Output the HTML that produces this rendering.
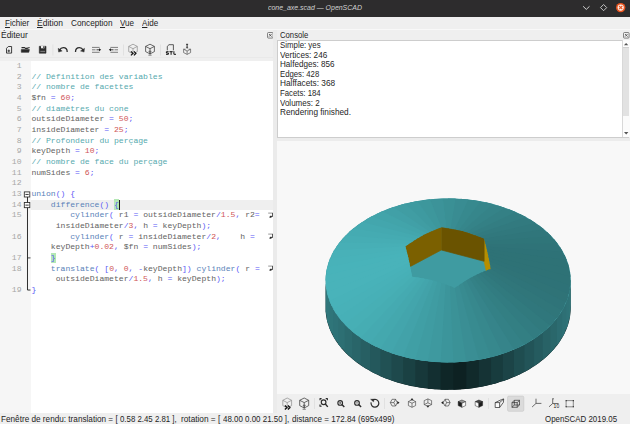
<!DOCTYPE html>
<html><head><meta charset="utf-8"><title>cone_axe.scad — OpenSCAD</title>
<style>
html,body{margin:0;padding:0;overflow:hidden;}
html{width:630px;height:424px;}
body{width:630px;height:424px;overflow:hidden;background:#efefef;position:relative;font-family:"Liberation Sans",sans-serif;color:#2b2b2b;}
div,span,svg{position:absolute;white-space:pre;}
span{position:static;}
.ln{left:0;width:21.5px;text-align:right;font-family:"Liberation Mono",monospace;font-size:8.11px;line-height:10.28px;height:10.28px;color:#a6a6a6;}
.cl{left:31.4px;font-family:"Liberation Mono",monospace;font-size:8.11px;line-height:10.28px;height:10.28px;}
.wrap{left:268px;}
</style></head><body>
<!-- title bar -->
<div style="left:0;top:0;width:630px;height:16.6px;background:#2d2c2d"></div>
<div style="left:268.00px;top:2px;font-size:7.8px;line-height:11.195px;color:#d2d2d2;font-style:italic;transform-origin:0 0;transform:scaleX(0.8920);">cone_axe.scad — OpenSCAD</div>
<svg style="left:578px;top:0" width="52" height="16" viewBox="578 0 52 16">
<path d="M583.1 6.3 L586.3 9.4 L589.5 6.3" fill="none" stroke="#d2d2d2" stroke-width="1"/>
<path d="M603.6 4.5 L606.7 7.6 L603.6 10.7 L600.5 7.6 Z" fill="none" stroke="#d2d2d2" stroke-width="0.9"/>
<circle cx="620.7" cy="7.6" r="4.7" fill="#e9541f"/>
<circle cx="620.7" cy="7.6" r="3.1" fill="#fbefe9"/>
<path d="M619.1 6 L622.3 9.2 M622.3 6 L619.1 9.2" stroke="#e9541f" stroke-width="1.1"/>
</svg>
<!-- menubar -->
<div style="left:0;top:16.6px;width:630px;height:12.4px;background:#efefef"></div>
<div style="left:4.50px;top:17px;font-size:9.0px;line-height:12.363px;color:#242424;transform-origin:0 0;transform:scaleX(0.8963);"><u>F</u>ichier</div>
<div style="left:36.50px;top:17px;font-size:9.0px;line-height:12.363px;color:#242424;transform-origin:0 0;transform:scaleX(0.9441);"><u>É</u>dition</div>
<div style="left:70.50px;top:17px;font-size:9.0px;line-height:12.363px;color:#242424;transform-origin:0 0;transform:scaleX(0.9113);">Conception</div>
<div style="left:119.90px;top:17px;font-size:9.0px;line-height:12.363px;color:#242424;transform-origin:0 0;transform:scaleX(0.8940);"><u>V</u>ue</div>
<div style="left:141.70px;top:17px;font-size:9.0px;line-height:12.363px;color:#242424;transform-origin:0 0;transform:scaleX(0.8944);"><u>A</u>ide</div>
<div style="left:0;top:29.2px;width:630px;height:0.9px;background:#f8f8f8"></div>
<!-- dock titles -->
<div style="left:1.10px;top:29px;font-size:9.0px;line-height:12.363px;color:#242424;transform-origin:0 0;transform:scaleX(0.9394);">Éditeur</div>
<div style="left:279.70px;top:29px;font-size:9.0px;line-height:12.363px;color:#242424;transform-origin:0 0;transform:scaleX(0.8568);">Console</div>
<svg style="left:267px;top:31.6px" width="7" height="7" viewBox="0 0 7 7"><rect x="0.5" y="0.5" width="5.6" height="5.6" rx="1" fill="none" stroke="#555" stroke-width="0.7"/><path d="M2 2 L4.6 4.6 M4.6 2 L2 4.6" stroke="#444" stroke-width="0.8"/></svg>
<svg style="left:622.9px;top:31.7px" width="7" height="7" viewBox="0 0 7 7"><rect x="0.5" y="0.5" width="5.6" height="5.6" rx="1" fill="none" stroke="#555" stroke-width="0.7"/><path d="M2 2 L4.6 4.6 M4.6 2 L2 4.6" stroke="#444" stroke-width="0.8"/></svg>
<!-- editor toolbar icons -->
<svg style="left:0;top:40px" width="200" height="20" viewBox="0 40 200 20">
<g fill="none" stroke="#2b2b2b" stroke-width="0.9" stroke-linejoin="round">
<!-- new -->
<path d="M8.3 46.5 H11.6 V53.1 H6.5 V48.3 Z" />
<path d="M7.5 50.9 H10.1 M8.8 49.6 V52.2" stroke-width="0.9"/>
<!-- open -->
<path d="M21.5 47.6 H24.6 L25.4 48.4 H27.5" stroke-width="1.1"/>
<path d="M26.5 48.6 L29.6 47.5" stroke-width="1.1"/>
<path d="M21.3 49.6 H29.4 L28.8 52.3 H21.3 Z" fill="#2b2b2b" stroke-width="0.6"/>
<!-- save -->
<path d="M39.3 46.3 H46 V53.2 H39.3 Z" fill="#2b2b2b" stroke-width="0.6"/>
<rect x="41" y="46" width="3.4" height="2.3" fill="#efefef" stroke="none"/>
<rect x="43.2" y="46.3" width="0.8" height="1.6" fill="#2b2b2b" stroke="none"/>
<rect x="40.3" y="50.8" width="4.8" height="1.3" fill="#777" stroke="none"/>
<!-- undo -->
<path d="M67.2 52 C67.2 49.3 65.6 47.6 63.3 47.6 C61.5 47.6 60.3 48.6 59.6 50" stroke-width="1.3"/>
<path d="M58.2 48.3 L58.6 52.1 L62.2 51 Z" fill="#2b2b2b" stroke-width="0.4"/>
<!-- redo -->
<path d="M75.5 52 C75.5 49.3 77.1 47.6 79.4 47.6 C81.2 47.6 82.4 48.6 83.1 50" stroke-width="1.3"/>
<path d="M84.5 48.3 L84.1 52.1 L80.5 51 Z" fill="#2b2b2b" stroke-width="0.4"/>
<!-- indent -->
<path d="M92 47.4 H99.6 M92 49.8 H95.5 M92 52.3 H99.6" stroke-width="0.75" stroke="#555"/>
<path d="M96.5 49.8 H100" stroke-width="0.9"/>
<path d="M99 48.3 L101.2 49.8 L99 51.3 Z" fill="#222" stroke="none"/>
<!-- unindent -->
<path d="M110.4 47.4 H118 M114.5 49.8 H118 M110.4 52.3 H118" stroke-width="0.75" stroke="#555"/>
<path d="M110 49.8 H113.5" stroke-width="0.9"/>
<path d="M111 48.3 L108.8 49.8 L111 51.3 Z" fill="#222" stroke="none"/>
<!-- preview cube -->
<g stroke="#8a8a8a" stroke-width="0.7">
<path d="M133 44.2 L137.3 46.4 V51.6 L133 53.9 L128.7 51.6 V46.4 Z"/>
<path d="M128.7 46.4 L133 48.7 L137.3 46.4 M133 48.7 V53.9"/>
</g>
<path d="M130.9 51.4 L133 53.4 L130.9 55.4 M133.9 51.4 L136 53.4 L133.9 55.4" stroke-width="1.3" stroke="#111"/>
<!-- render cube -->
<g stroke="#3a3a3a" stroke-width="0.75">
<path d="M150 44.2 L154.4 46.4 V51.6 L150 53.9 L145.6 51.6 V46.4 Z"/>
<path d="M145.6 46.4 L150 48.7 L154.4 46.4 M150 48.7 V53.9"/>
<path d="M148.8 51.2 H151.2 L150 52.6 Z M150 52.6 V54.6 M148.4 55.2 H151.6" stroke-width="0.6"/>
</g>
<!-- STL -->
<path d="M167.3 50.3 V46.3 L169 44.7 H173.4 V50.3" stroke-width="0.8" stroke="#333"/>
<!-- 3d print -->
<path d="M187.1 44 V47.6 M186.1 44.3 H188.1" stroke-width="1" stroke="#333"/>
<path d="M186.2 47.2 L187.1 48.6 L188 47.2 Z" fill="#333" stroke-width="0.3"/>
<g stroke="#555" stroke-width="0.7">
<path d="M183.6 49.2 H185.6 M188.6 49.2 H190.6 V52.6 L187.1 54.4 L183.6 52.6 V49.2"/>
<path d="M183.6 49.2 L187.1 51 L190.6 49.2 M187.1 51 V54.4"/>
</g>
</g>
<path d="M168.6 51.7 H166.4 V53 H168.4 V54.3 H166 M169.5 51.7 H172.7 M171.1 51.7 V54.8 M173.9 51.2 V54.3 H176" fill="none" stroke="#151515" stroke-width="1"/>
<!-- separators -->
<g fill="#dcdcdc">
<rect x="52.6" y="44.5" width="0.7" height="11"/>
<rect x="123.2" y="44.5" width="0.7" height="11"/>
<rect x="160.3" y="44.5" width="0.7" height="11"/>
</g>
</svg>

<div style="left:0;top:56.6px;width:273.2px;height:0.7px;background:#e9e9e9"></div>
<!-- editor -->
<div style="left:0;top:60.5px;width:273.2px;height:352.1px;background:#ffffff"></div>
<div style="left:0;top:60.5px;width:30.5px;height:352.1px;background:#f6f6f6"></div>
<div style="left:30.5px;top:199.51px;width:242.7px;height:10.37px;background:#efefef"></div>
<!-- fold margin -->
<svg style="left:22px;top:188.54px" width="10" height="106.7" viewBox="0 0 10 106.7">
<path d="M5.5 8 V101.03 H8.5" fill="none" stroke="#2e2e2e" stroke-width="1"/>
<path d="M5.5 68.92 H8.5" fill="none" stroke="#2e2e2e" stroke-width="0.9"/>
<rect x="2.3" y="2.9" width="5.5" height="5.1" fill="#fff" stroke="#2a2a2a" stroke-width="0.85"/>
<path d="M3.4 5.45 H6.7" stroke="#222" stroke-width="0.9"/>
<rect x="2.3" y="13.57" width="5.5" height="5.1" fill="#fff" stroke="#2a2a2a" stroke-width="0.85"/>
<path d="M3.4 16.12 H6.7" stroke="#222" stroke-width="0.9"/>
</svg>
<div style="left:113.92px;top:199.41px;width:5.07px;height:10.3px;background:#b4e8b4"></div>
<div style="left:50.66px;top:252.76px;width:5.07px;height:10.3px;background:#b4e8b4"></div>
<div class="ln" style="top:61px">1</div><div class="cl" style="top:61px"></div><div class="ln" style="top:72px">2</div><div class="cl" style="top:72px"><span style="color:#55a9ae">// Définition des variables</span></div><div class="ln" style="top:82px">3</div><div class="cl" style="top:82px"><span style="color:#55a9ae">// nombre de facettes</span></div><div class="ln" style="top:93px">4</div><div class="cl" style="top:93px"><span style="color:#626261">$fn</span> <span style="color:#5a5af6">=</span> <span style="color:#cf5657">60</span><span style="color:#5a5af6">;</span></div><div class="ln" style="top:104px">5</div><div class="cl" style="top:104px"><span style="color:#55a9ae">// diamètres du cone</span></div><div class="ln" style="top:114px">6</div><div class="cl" style="top:114px"><span style="color:#626261">outsideDiameter</span> <span style="color:#5a5af6">=</span> <span style="color:#cf5657">50</span><span style="color:#5a5af6">;</span></div><div class="ln" style="top:125px">7</div><div class="cl" style="top:125px"><span style="color:#626261">insideDiameter</span> <span style="color:#5a5af6">=</span> <span style="color:#cf5657">25</span><span style="color:#5a5af6">;</span></div><div class="ln" style="top:136px">8</div><div class="cl" style="top:136px"><span style="color:#55a9ae">// Profondeur du perçage</span></div><div class="ln" style="top:146px">9</div><div class="cl" style="top:146px"><span style="color:#626261">keyDepth</span> <span style="color:#5a5af6">=</span> <span style="color:#cf5657">10</span><span style="color:#5a5af6">;</span></div><div class="ln" style="top:157px">10</div><div class="cl" style="top:157px"><span style="color:#55a9ae">// nombre de face du perçage</span></div><div class="ln" style="top:168px">11</div><div class="cl" style="top:168px"><span style="color:#626261">numSides</span> <span style="color:#5a5af6">=</span> <span style="color:#cf5657">6</span><span style="color:#5a5af6">;</span></div><div class="ln" style="top:178px">12</div><div class="cl" style="top:178px"></div><div class="ln" style="top:189px">13</div><div class="cl" style="top:189px"><span style="color:#5781b8">union</span><span style="color:#5a5af6">(</span><span style="color:#5a5af6">)</span> <span style="color:#5a5af6">{</span></div><div class="ln" style="top:200px">14</div><div class="cl" style="top:200px">    <span style="color:#5781b8">difference</span><span style="color:#5a5af6">(</span><span style="color:#5a5af6">)</span> <span style="color:#5a5af6">{</span></div><div class="ln" style="top:210px">15</div><div class="cl" style="top:210px">        <span style="color:#5781b8">cylinder</span><span style="color:#5a5af6">(</span> <span style="color:#626261">r1</span> <span style="color:#5a5af6">=</span> <span style="color:#626261">outsideDiameter</span><span style="color:#5a5af6">/</span><span style="color:#cf5657">1.5</span><span style="color:#5a5af6">,</span> <span style="color:#626261">r2</span><span style="color:#5a5af6">=</span></div><svg class="wrap" style="top:209.88px" width="6" height="10" viewBox="0 0 6 10"><path d="M0.2 3.1 H4.6" fill="none" stroke="#8a8a8a" stroke-width="0.9"/><path d="M4.6 2.9 V6.5 H2.6" fill="none" stroke="#333" stroke-width="0.9"/><path d="M3.2 5.2 L1 7.2 L3.4 7.9 Z" fill="#222"/></svg><div class="cl" style="top:221px">     <span style="color:#626261">insideDiameter</span><span style="color:#5a5af6">/</span><span style="color:#cf5657">3</span><span style="color:#5a5af6">,</span> <span style="color:#626261">h</span> <span style="color:#5a5af6">=</span> <span style="color:#626261">keyDepth</span><span style="color:#5a5af6">)</span><span style="color:#5a5af6">;</span></div><div class="ln" style="top:232px">16</div><div class="cl" style="top:232px">        <span style="color:#5781b8">cylinder</span><span style="color:#5a5af6">(</span> <span style="color:#626261">r</span> <span style="color:#5a5af6">=</span> <span style="color:#626261">insideDiameter</span><span style="color:#5a5af6">/</span><span style="color:#cf5657">2</span><span style="color:#5a5af6">,</span>    <span style="color:#626261">h</span> <span style="color:#5a5af6">=</span></div><svg class="wrap" style="top:231.22px" width="6" height="10" viewBox="0 0 6 10"><path d="M0.2 3.1 H4.6" fill="none" stroke="#8a8a8a" stroke-width="0.9"/><path d="M4.6 2.9 V6.5 H2.6" fill="none" stroke="#333" stroke-width="0.9"/><path d="M3.2 5.2 L1 7.2 L3.4 7.9 Z" fill="#222"/></svg><div class="cl" style="top:242px">    <span style="color:#626261">keyDepth</span><span style="color:#5a5af6">+</span><span style="color:#cf5657">0.02</span><span style="color:#5a5af6">,</span> <span style="color:#626261">$fn</span> <span style="color:#5a5af6">=</span> <span style="color:#626261">numSides</span><span style="color:#5a5af6">)</span><span style="color:#5a5af6">;</span></div><div class="ln" style="top:253px">17</div><div class="cl" style="top:253px">    <span style="color:#5a5af6">}</span></div><div class="ln" style="top:264px">18</div><div class="cl" style="top:264px">    <span style="color:#5781b8">translate</span><span style="color:#5a5af6">(</span> <span style="color:#5a5af6">[</span><span style="color:#cf5657">0</span><span style="color:#5a5af6">,</span> <span style="color:#cf5657">0</span><span style="color:#5a5af6">,</span> <span style="color:#5a5af6">-</span><span style="color:#626261">keyDepth</span><span style="color:#5a5af6">]</span><span style="color:#5a5af6">)</span> <span style="color:#5781b8">cylinder</span><span style="color:#5a5af6">(</span> <span style="color:#626261">r</span> <span style="color:#5a5af6">=</span></div><svg class="wrap" style="top:263.23px" width="6" height="10" viewBox="0 0 6 10"><path d="M0.2 3.1 H4.6" fill="none" stroke="#8a8a8a" stroke-width="0.9"/><path d="M4.6 2.9 V6.5 H2.6" fill="none" stroke="#333" stroke-width="0.9"/><path d="M3.2 5.2 L1 7.2 L3.4 7.9 Z" fill="#222"/></svg><div class="cl" style="top:274px">     <span style="color:#626261">outsideDiameter</span><span style="color:#5a5af6">/</span><span style="color:#cf5657">1.5</span><span style="color:#5a5af6">,</span> <span style="color:#626261">h</span> <span style="color:#5a5af6">=</span> <span style="color:#626261">keyDepth</span><span style="color:#5a5af6">)</span><span style="color:#5a5af6">;</span></div><div class="ln" style="top:285px">19</div><div class="cl" style="top:285px"><span style="color:#5a5af6">}</span></div>
<!-- caret -->
<div style="left:118.54px;top:199.51px;width:1px;height:10.2px;background:#1a1a1a"></div>
<!-- splitter -->
<div style="left:273.2px;top:29.6px;width:3.8px;height:384px;background:#ebebeb"></div>
<!-- console -->
<div style="left:277.3px;top:40px;width:352.2px;height:97.6px;background:#fff;border:0.6px solid #cdcdcd;box-sizing:border-box"></div>
<div style="left:622.4px;top:40.4px;width:6.9px;height:96.5px;background:#fbfbfb;border-left:0.5px solid #d8d8d8"></div>
<div style="left:622.9px;top:47.3px;width:6.4px;height:69.2px;background:#e2e2e2"></div>
<div style="left:622.9px;top:47.1px;width:6.4px;height:0.5px;background:#d0d0d0"></div>
<div style="left:622.9px;top:129.9px;width:6.4px;height:0.5px;background:#d8d8d8"></div>
<div style="left:622.9px;top:40.6px;width:6.4px;height:6.4px;background:#fdfdfd"></div>
<div style="left:622.9px;top:130.3px;width:6.4px;height:6.5px;background:#fdfdfd"></div>
<svg style="left:622px;top:40px" width="8" height="98" viewBox="622 40 8 98"><path d="M623.9 45.3 L626.1 43 L628.3 45.3 Z M624 132.1 L626.2 134.4 L628.4 132.1 Z" fill="#555"/></svg>
<div style="left:279.90px;top:39px;font-size:9.0px;line-height:12.363px;color:#262626;transform-origin:0 0;transform:scaleX(0.8726);">Simple: yes</div><div style="left:279.90px;top:49px;font-size:9.0px;line-height:12.363px;color:#262626;transform-origin:0 0;transform:scaleX(0.9073);">Vertices: 246</div><div style="left:279.90px;top:58px;font-size:9.0px;line-height:12.363px;color:#262626;transform-origin:0 0;transform:scaleX(0.9005);">Halfedges: 856</div><div style="left:279.90px;top:68px;font-size:9.0px;line-height:12.363px;color:#262626;transform-origin:0 0;transform:scaleX(0.8608);">Edges: 428</div><div style="left:279.90px;top:77px;font-size:9.0px;line-height:12.363px;color:#262626;transform-origin:0 0;transform:scaleX(0.9206);">Halffacets: 368</div><div style="left:279.90px;top:87px;font-size:9.0px;line-height:12.363px;color:#262626;transform-origin:0 0;transform:scaleX(0.8634);">Facets: 184</div><div style="left:279.90px;top:97px;font-size:9.0px;line-height:12.363px;color:#262626;transform-origin:0 0;transform:scaleX(0.8898);">Volumes: 2</div><div style="left:279.90px;top:106px;font-size:9.0px;line-height:12.363px;color:#262626;transform-origin:0 0;transform:scaleX(0.9144);">Rendering finished.</div>
<div style="left:277px;top:137.6px;width:353px;height:3.1px;background:#ececec"></div>
<!-- 3d view -->
<div style="left:277.4px;top:140.7px;width:352.6px;height:253.1px;background:#f8f8f8;overflow:hidden">
<div style="left:-0.4px;top:-0.2px"><svg width="353.0" height="253.3" viewBox="277.0 140.5 353.0 253.3">
<polygon points="325.62,283.50 325.92,286.71 326.42,289.92 327.10,293.11 327.96,296.28 329.02,299.42 330.25,302.53 331.67,305.61 333.27,308.65 335.04,311.65 336.99,314.59 339.11,317.48 341.40,320.32 343.85,323.09 346.46,325.80 349.23,328.43 352.16,330.99 355.23,333.47 358.44,335.87 361.79,338.18 365.28,340.41 368.89,342.54 372.63,344.57 376.48,346.50 380.44,348.33 384.51,350.06 388.67,351.67 392.93,353.18 397.27,354.57 401.69,355.85 406.18,357.01 410.73,358.06 415.35,358.98 420.01,359.78 424.72,360.45 429.46,361.01 434.23,361.43 439.03,361.73 443.83,361.91 448.65,361.96 453.46,361.88 458.27,361.68 463.05,361.35 467.82,360.89 472.56,360.31 477.25,359.61 481.91,358.78 486.51,357.83 491.05,356.77 495.53,355.58 499.93,354.27 504.25,352.86 508.49,351.32 512.63,349.68 516.67,347.93 520.61,346.08 524.44,344.13 528.15,342.07 531.73,339.92 535.19,337.68 538.51,335.35 541.69,332.93 544.73,330.43 547.62,327.85 550.35,325.20 552.93,322.48 555.35,319.69 557.60,316.85 559.68,313.94 561.59,310.98 563.33,307.98 564.89,304.93 566.26,301.84 567.46,298.72 568.47,295.57 569.30,292.40 569.93,289.21 570.39,286.00 570.65,282.78 570.72,279.56 570.61,276.34 570.61,303.67 570.72,306.90 570.65,310.12 570.39,313.33 569.93,316.54 569.30,319.73 568.47,322.91 567.46,326.06 566.26,329.18 564.89,332.27 563.33,335.31 561.59,338.32 559.68,341.28 557.60,344.18 555.35,347.03 552.93,349.81 550.35,352.54 547.62,355.19 544.73,357.76 541.69,360.26 538.51,362.68 535.19,365.01 531.73,367.26 528.15,369.41 524.44,371.46 520.61,373.42 516.67,375.27 512.63,377.02 508.49,378.66 504.25,380.19 499.93,381.61 495.53,382.91 491.05,384.10 486.51,385.17 481.91,386.12 477.25,386.94 472.56,387.65 467.82,388.23 463.05,388.68 458.27,389.01 453.46,389.22 448.65,389.29 443.83,389.25 439.03,389.07 434.23,388.77 429.46,388.34 424.72,387.79 420.01,387.11 415.35,386.31 410.73,385.39 406.18,384.35 401.69,383.19 397.27,381.91 392.93,380.52 388.67,379.01 384.51,377.39 380.44,375.67 376.48,373.84 372.63,371.90 368.89,369.87 365.28,367.74 361.79,365.52 358.44,363.21 355.23,360.81 352.16,358.33 349.23,355.77 346.46,353.13 343.85,350.43 341.40,347.65 339.11,344.82 336.99,341.93 335.04,338.98 333.27,335.99 331.67,332.95 330.25,329.87 329.02,326.75 327.96,323.61 327.10,320.44 326.42,317.25 325.92,314.05 325.62,310.83" fill="#0d2123"/>
<polygon points="325.62,310.83 328.23,324.45 328.23,297.12 325.62,283.50" fill="#30777c"/>
<polygon points="326.85,319.38 331.57,332.74 331.57,305.41 326.85,292.05" fill="#30767b"/>
<polygon points="329.41,327.80 336.19,340.75 336.19,313.42 329.41,300.46" fill="#2f7579"/>
<polygon points="333.27,335.99 342.04,348.40 342.04,321.06 333.27,308.65" fill="#2e7277"/>
<polygon points="338.38,343.86 349.04,355.59 349.04,328.26 338.38,316.53" fill="#2d6f73"/>
<polygon points="344.70,351.33 357.14,362.26 357.14,334.92 344.70,324.00" fill="#2b6a6e"/>
<polygon points="352.16,358.33 366.23,368.32 366.23,340.98 352.16,330.99" fill="#296569"/>
<polygon points="360.66,364.76 376.22,373.71 376.22,346.38 360.66,337.42" fill="#275f63"/>
<polygon points="370.12,370.56 386.99,378.38 386.99,351.04 370.12,343.22" fill="#24585c"/>
<polygon points="380.44,375.67 398.44,382.26 398.44,354.93 380.44,348.33" fill="#215154"/>
<polygon points="391.50,380.03 410.43,385.32 410.43,357.99 391.50,352.69" fill="#1e494c"/>
<polygon points="403.18,383.59 422.83,387.53 422.83,360.20 403.18,356.25" fill="#1a4143"/>
<polygon points="415.35,386.31 435.51,388.86 435.51,361.53 415.35,358.98" fill="#17383a"/>
<polygon points="427.88,388.17 448.33,389.30 448.33,361.96 427.88,360.84" fill="#132f31"/>
<polygon points="440.63,389.14 461.14,388.83 461.14,361.50 440.63,361.81" fill="#0f2627"/>
<polygon points="453.46,389.22 473.81,387.47 473.81,360.14 453.46,361.88" fill="#0d2122"/>
<polygon points="466.24,388.39 486.20,385.24 486.20,357.90 466.24,361.06" fill="#112a2b"/>
<polygon points="478.81,386.68 498.18,382.14 498.18,354.81 478.81,359.35" fill="#153335"/>
<polygon points="491.05,384.10 509.60,378.23 509.60,350.90 491.05,356.77" fill="#183c3e"/>
<polygon points="502.82,380.68 520.35,373.54 520.35,346.21 502.82,353.34" fill="#1c4447"/>
<polygon points="513.99,376.45 530.31,368.13 530.31,340.79 513.99,349.11" fill="#1f4d50"/>
<polygon points="524.44,371.46 539.37,362.04 539.37,334.71 524.44,344.13" fill="#225458"/>
<polygon points="534.05,365.77 547.43,355.36 547.43,328.03 534.05,338.44" fill="#255b5f"/>
<polygon points="542.72,359.44 554.40,348.15 554.40,320.82 542.72,332.10" fill="#286266"/>
<polygon points="550.35,352.54 560.21,340.49 560.21,313.16 550.35,325.20" fill="#2a676b"/>
<polygon points="556.87,345.14 564.79,332.47 564.79,305.13 556.87,317.80" fill="#2c6c71"/>
<polygon points="562.19,337.32 568.09,324.17 568.09,296.84 562.19,309.99" fill="#2e7075"/>
<polygon points="566.26,329.18 570.07,315.69 570.07,288.35 566.26,301.84" fill="#2f7378"/>
<polygon points="569.04,320.79 570.72,307.11 570.72,279.78 569.04,293.46" fill="#30767a"/>
<polygon points="570.49,312.26 570.61,303.67 570.61,276.34 570.49,284.93" fill="#30777c"/>
<polygon points="562.19,309.99 564.39,305.95 566.26,301.84 567.82,297.68 569.04,293.46 569.93,289.21 570.49,284.93 570.72,280.63 570.61,276.34 570.16,272.06 569.38,267.79 568.26,263.56 566.82,259.38 565.05,255.25 562.96,251.19 560.55,247.20 557.84,243.31 554.83,239.52 551.52,235.84 547.93,232.28 544.07,228.85 539.94,225.56 535.56,222.41 530.95,219.43 526.10,216.61 521.04,213.97 515.79,211.50 510.34,209.23 504.73,207.15 498.96,205.26 493.05,203.59 487.02,202.12 480.88,200.86 474.65,199.82 468.35,199.00 461.99,198.40 455.60,198.03 449.18,197.88 442.76,197.95 436.36,198.25 429.99,198.78 423.67,199.52 417.41,200.49 411.24,201.67 405.17,203.07 399.22,204.68 393.40,206.50 387.74,208.51 382.23,210.72 376.91,213.13 371.79,215.71 366.87,218.47 362.17,221.40 357.71,224.49 353.50,227.73 349.55,231.12 345.87,234.64 342.47,238.28 339.36,242.04 336.54,245.90 334.03,249.85 331.84,253.89 329.96,257.99 328.41,262.16 327.18,266.38 326.29,270.63 325.73,274.91 325.51,279.20 325.62,283.50 326.07,287.78 326.85,292.05 327.96,296.28 329.41,300.46 331.18,304.59 333.27,308.65 335.67,312.63 338.38,316.53 341.40,320.32 344.70,324.00 348.29,327.56 352.16,330.99 356.28,334.28 360.66,337.42 365.28,340.41 370.12,343.22 375.18,345.87 380.44,348.33 385.88,350.61 391.50,352.69 397.27,354.57 403.18,356.25 409.21,357.72 415.35,358.98 421.57,360.02 427.88,360.84 434.23,361.43 440.63,361.81 447.04,361.96 453.46,361.88 459.86,361.58 466.24,361.06 472.56,360.31 478.81,359.35 484.98,358.16 491.05,356.77 497.00,355.16 502.82,353.34 508.49,351.32 513.99,349.11 519.31,346.71 524.44,344.13 529.36,341.36 534.05,338.44 538.51,335.35 542.72,332.10 546.67,328.72 550.35,325.20 553.76,321.56 556.87,317.80 559.68,313.94" fill="#3f9ba1"/>
<polygon points="490.89,291.19 484.10,260.77 441.32,249.49 405.33,268.64 412.13,299.07 454.91,310.35" fill="#3f9ba1"/>
<polygon points="490.89,291.19 484.10,260.77 484.10,237.99 487.49,251.37 490.89,268.41" fill="#b68e00" stroke="#b68e00" stroke-width="0.7" stroke-linejoin="round"/>
<polygon points="484.10,260.77 441.32,249.49 441.32,226.71 462.71,230.52 484.10,237.99" fill="#6a5300" stroke="#6a5300" stroke-width="0.7" stroke-linejoin="round"/>
<polygon points="441.32,249.49 405.33,268.64 405.33,245.86 423.32,234.46 441.32,226.71" fill="#7b6000" stroke="#7b6000" stroke-width="0.7" stroke-linejoin="round"/>
<polygon points="442.76,197.95 422.41,199.70 438.79,227.60 440.46,227.01 441.32,226.71 442.34,226.82 444.31,227.05 446.21,227.29" fill="#3c9399"/>
<polygon points="429.99,198.78 410.02,201.94 434.91,229.08 436.42,228.49 437.99,227.90 439.62,227.31 441.32,226.71" fill="#3d979c"/>
<polygon points="417.41,200.49 398.05,205.03 431.33,230.58 432.73,229.98 434.18,229.38 435.66,228.78 437.20,228.19" fill="#3e9aa0"/>
<polygon points="405.17,203.07 386.62,208.94 427.93,232.14 429.27,231.51 430.63,230.89 432.03,230.28 433.45,229.68" fill="#409da3"/>
<polygon points="393.40,206.50 375.87,213.63 424.63,233.77 425.94,233.11 427.26,232.46 428.60,231.82 429.95,231.20" fill="#41a0a7"/>
<polygon points="382.23,210.72 365.91,219.05 421.36,235.52 422.67,234.81 423.98,234.11 425.28,233.44 426.60,232.78" fill="#42a4aa"/>
<polygon points="371.79,215.71 356.85,225.13 418.05,237.43 419.39,236.65 420.71,235.89 422.02,235.16 423.32,234.46" fill="#43a6ad"/>
<polygon points="362.17,221.40 348.79,231.81 414.62,239.54 416.02,238.67 417.38,237.83 418.72,237.03 420.05,236.26" fill="#44a9b0"/>
<polygon points="353.50,227.73 341.82,239.02 410.99,241.92 412.47,240.93 413.92,239.99 415.32,239.10 416.70,238.25" fill="#45abb2"/>
<polygon points="345.87,234.64 336.02,246.68 407.03,244.65 408.66,243.51 410.22,242.43 411.74,241.42 413.20,240.45" fill="#46adb4"/>
<polygon points="339.36,242.04 331.44,254.70 405.81,247.54 405.50,246.43 405.33,245.86 406.19,245.25 407.86,244.07 409.45,242.96" fill="#47afb6"/>
<polygon points="334.03,249.85 328.14,263.00 406.54,250.24 406.26,249.17 405.96,248.09 405.65,246.99 405.33,245.86 405.33,245.86" fill="#48b1b8"/>
<polygon points="329.96,257.99 326.15,271.49 407.22,252.86 406.95,251.82 406.68,250.77 406.40,249.71 406.11,248.63" fill="#48b2b9"/>
<polygon points="327.18,266.38 325.50,280.06 407.86,255.48 407.61,254.43 407.35,253.39 407.09,252.34 406.82,251.29" fill="#48b3ba"/>
<polygon points="325.73,274.91 326.20,288.64 408.48,258.15 408.24,257.08 407.99,256.01 407.74,254.96 407.48,253.91" fill="#49b3ba"/>
<polygon points="325.62,283.50 328.23,297.12 409.10,260.93 408.85,259.80 408.61,258.70 408.36,257.61 408.11,256.54" fill="#49b3ba"/>
<polygon points="326.85,292.05 331.57,305.41 409.73,263.87 409.47,262.67 409.23,261.50 408.98,260.36 408.73,259.25" fill="#49b3ba"/>
<polygon points="329.41,300.46 336.19,313.42 410.37,267.06 410.11,265.75 409.85,264.49 409.60,263.27 409.35,262.08" fill="#48b2b9"/>
<polygon points="333.27,308.65 342.04,321.06 411.06,270.57 410.78,269.12 410.51,267.73 410.24,266.40 409.98,265.11" fill="#48b1b8"/>
<polygon points="338.38,316.53 349.04,328.26 411.81,274.54 411.50,272.89 411.20,271.33 410.92,269.84 410.64,268.42" fill="#47b0b7"/>
<polygon points="344.70,324.00 357.14,334.92 415.13,276.63 413.15,276.40 412.13,276.29 411.97,275.40 411.65,273.71 411.35,272.10" fill="#47afb5"/>
<polygon points="352.16,330.99 366.23,340.98 419.74,277.26 417.94,277.00 416.09,276.75 414.15,276.51 412.13,276.29" fill="#46adb3"/>
<polygon points="360.66,337.42 376.22,346.38 424.01,277.97 422.33,277.68 420.62,277.39 418.85,277.13 417.02,276.87" fill="#45aab1"/>
<polygon points="370.12,343.22 386.99,351.04 428.05,278.78 426.45,278.45 424.83,278.13 423.17,277.82 421.48,277.53" fill="#44a8ae"/>
<polygon points="380.44,348.33 398.44,354.93 431.97,279.70 430.41,279.32 428.84,278.96 427.25,278.61 425.64,278.29" fill="#43a5ac"/>
<polygon points="391.50,352.69 410.43,357.99 435.85,280.74 434.29,280.31 432.74,279.90 431.19,279.51 429.62,279.14" fill="#42a2a9"/>
<polygon points="403.18,356.25 422.83,360.20 439.78,281.92 438.20,281.43 436.63,280.96 435.07,280.52 433.52,280.10" fill="#409fa5"/>
<polygon points="415.35,358.98 435.51,361.53 443.86,283.28 442.21,282.71 440.59,282.17 438.99,281.67 437.41,281.19" fill="#3f9ca2"/>
<polygon points="427.88,360.84 448.33,361.96 448.19,284.86 446.42,284.20 444.70,283.57 443.03,282.99 441.39,282.44" fill="#3e999f"/>
<polygon points="440.63,361.81 461.14,361.50 452.89,286.72 450.95,285.94 449.09,285.21 447.30,284.52 445.56,283.88" fill="#3c959b"/>
<polygon points="453.46,361.88 473.81,360.14 457.43,285.77 455.77,286.95 454.91,287.57 453.89,287.14 451.91,286.32 450.01,285.57" fill="#3b9297"/>
<polygon points="466.24,361.06 486.20,357.90 461.31,283.12 459.80,284.14 458.24,285.21 456.61,286.35 454.91,287.57" fill="#3a8e94"/>
<polygon points="478.81,359.35 498.18,354.81 464.90,280.80 463.49,281.70 462.05,282.63 460.56,283.62 459.03,284.66" fill="#388b90"/>
<polygon points="491.05,356.77 509.60,350.90 468.30,278.74 466.96,279.54 465.59,280.37 464.20,281.24 462.77,282.16" fill="#37888d"/>
<polygon points="502.82,353.34 520.35,346.21 471.59,276.87 470.28,277.59 468.96,278.35 467.63,279.13 466.28,279.95" fill="#36848a"/>
<polygon points="513.99,349.11 530.31,340.79 474.86,275.14 473.55,275.82 472.25,276.51 470.94,277.23 469.62,277.97" fill="#348186"/>
<polygon points="524.44,344.13 539.37,334.71 478.17,273.52 476.84,274.16 475.52,274.81 474.21,275.48 472.90,276.16" fill="#337f83"/>
<polygon points="534.05,338.44 547.43,328.03 481.60,271.98 480.21,272.59 478.84,273.21 477.50,273.84 476.18,274.48" fill="#327c81"/>
<polygon points="542.72,332.10 554.40,320.82 485.24,270.49 483.75,271.08 482.31,271.68 480.90,272.29 479.52,272.90" fill="#317a7e"/>
<polygon points="550.35,325.20 560.21,313.16 489.19,269.01 487.56,269.60 486.00,270.19 484.49,270.78 483.03,271.38" fill="#30777c"/>
<polygon points="556.87,317.80 564.79,305.13 490.42,265.83 490.73,267.53 490.89,268.41 490.03,268.71 488.37,269.30 486.77,269.90" fill="#30767a"/>
<polygon points="562.19,309.99 568.09,296.84 489.68,261.96 489.97,263.45 490.26,265.01 490.57,266.67 490.89,268.41" fill="#2f7479"/>
<polygon points="566.26,301.84 570.07,288.35 489.00,258.52 489.27,259.85 489.54,261.24 489.82,262.70 490.11,264.22" fill="#2f7377"/>
<polygon points="569.04,293.46 570.72,279.78 488.36,255.39 488.62,256.61 488.87,257.87 489.14,259.18 489.41,260.54" fill="#2e7277"/>
<polygon points="570.49,284.93 570.03,271.20 487.74,252.48 487.99,253.62 488.24,254.79 488.49,255.99 488.74,257.24" fill="#2e7276"/>
<polygon points="570.61,276.34 568.00,262.72 487.12,249.74 487.37,250.82 487.62,251.92 487.86,253.05 488.11,254.20" fill="#2e7276"/>
<polygon points="569.38,267.79 564.65,254.43 486.50,247.08 486.75,248.14 487.00,249.20 487.25,250.28 487.49,251.37" fill="#2e7276"/>
<polygon points="566.82,259.38 560.03,246.42 485.85,244.47 486.11,245.51 486.37,246.56 486.62,247.61 486.87,248.67" fill="#2e7277"/>
<polygon points="562.96,251.19 554.19,238.77 485.16,241.83 485.44,242.89 485.72,243.94 485.98,244.99 486.24,246.03" fill="#2f7378"/>
<polygon points="557.84,243.31 547.18,231.58 484.42,239.11 484.72,240.21 485.02,241.30 485.30,242.36 485.58,243.42" fill="#2f7579"/>
<polygon points="551.52,235.84 539.09,224.92 481.10,236.74 483.07,237.56 484.10,237.99 484.26,238.55 484.57,239.67 484.87,240.76" fill="#30767b"/>
<polygon points="544.07,228.85 530.00,218.85 476.48,234.94 478.28,235.63 480.14,236.36 482.07,237.14 484.10,237.99" fill="#31787d"/>
<polygon points="535.56,222.41 520.01,213.46 472.22,233.41 473.89,233.99 475.61,234.62 477.37,235.28 479.20,235.99" fill="#327a7f"/>
<polygon points="526.10,216.61 509.23,208.80 468.18,232.09 469.77,232.59 471.40,233.13 473.05,233.70 474.74,234.30" fill="#337d82"/>
<polygon points="515.79,211.50 497.79,204.91 464.26,230.94 465.82,231.38 467.39,231.85 468.97,232.34 470.58,232.86" fill="#348085"/>
<polygon points="504.73,207.15 485.80,201.85 460.37,229.93 461.93,230.32 463.48,230.73 465.04,231.16 466.60,231.61" fill="#358388"/>
<polygon points="493.05,203.59 473.39,199.64 456.44,229.03 458.03,229.38 459.59,229.74 461.15,230.12 462.71,230.52" fill="#36868b"/>
<polygon points="480.88,200.86 460.72,198.31 452.36,228.24 454.02,228.55 455.64,228.87 457.24,229.20 458.81,229.56" fill="#37898e"/>
<polygon points="468.35,199.00 447.90,197.88 448.04,227.55 449.80,227.81 451.52,228.10 453.19,228.39 454.83,228.71" fill="#398c92"/>
<polygon points="455.60,198.03 442.76,197.95 446.21,227.29 447.36,227.45 448.48,227.61 449.59,227.78 450.67,227.95" fill="#3a9095"/>
</svg></div>
</div>
<!-- view toolbar -->
<div style="left:277px;top:393.8px;width:353px;height:18.8px;background:#efefef"></div>
<svg style="left:277px;top:394px" width="353" height="19" viewBox="277 394 353 19">
<rect x="507.6" y="396.1" width="16.2" height="15.2" rx="1.3" fill="#dbdbdb" stroke="#c6c6c6" stroke-width="0.6"/>
<g fill="none" stroke="#2b2b2b" stroke-width="0.8" stroke-linejoin="round">
<!-- preview cube -->
<g stroke="#8a8a8a" stroke-width="0.7">
<path d="M287.2 398 L291.6 400.3 V405.6 L287.2 408 L282.8 405.6 V400.3 Z"/>
<path d="M282.8 400.3 L287.2 402.6 L291.6 400.3 M287.2 402.6 V408"/>
</g>
<path d="M284.9 405.5 L287 407.5 L284.9 409.5 M287.9 405.5 L290 407.5 L287.9 409.5" stroke-width="1.35" stroke="#111"/>
<!-- render cube -->
<g stroke="#3a3a3a" stroke-width="0.75">
<path d="M304.2 398 L308.7 400.3 V405.6 L304.2 408 L299.7 405.6 V400.3 Z"/>
<path d="M299.7 400.3 L304.2 402.6 L308.7 400.3 M304.2 402.6 V408"/>
<path d="M303 405.2 H305.4 L304.2 406.6 Z M304.2 406.6 V408.6 M302.6 409.3 H305.8" stroke-width="0.6"/>
</g>
<!-- view all -->
<circle cx="323.6" cy="402.3" r="2.35" stroke-width="1.15"/>
<path d="M325.3 404 L327.8 406.9" stroke-width="1.4"/>
<path d="M320 400.2 V398.6 H321.6 M325.7 398.6 H327.4 V400.2 M320 404.6 V406.2 H321.6" stroke-width="1.1"/>
<!-- zoom in -->
<circle cx="340.2" cy="402.9" r="2.35" stroke-width="1.15"/>
<path d="M341.9 404.6 L344.3 407.1" stroke-width="1.4"/>
<path d="M339.1 402.9 H341.3 M340.2 401.8 V404" stroke-width="0.6"/>
<!-- zoom out -->
<circle cx="357" cy="402.9" r="2.35" stroke-width="1.15"/>
<path d="M358.7 404.6 L361.1 407.1" stroke-width="1.4"/>
<path d="M355.9 402.9 H358.1" stroke-width="0.6"/>
<!-- reset view -->
<path d="M372.6 400.1 A3.9 3.9 0 1 1 371.1 402.4" stroke-width="1.2"/>
<path d="M370.5 399.2 L374 399 L373.6 402 Z" fill="#2b2b2b" stroke-width="0.3"/>
<!-- right -->
<g stroke="#3a3a3a" stroke-width="0.65">
<path d="M390.3 402.6 L392.1 399.3 H395.6 L397.3 402.6 L395.6 406 H392.1 Z M393.8 402.6 H390.3 M393.8 402.6 L395.6 399.3 M393.8 402.6 L395.6 406"/>
</g>
<path d="M397.3 401.1 L399.5 402.7 L397.3 404.3 Z" fill="#1a1a1a" stroke="none"/>
<!-- top -->
<g stroke="#444" stroke-width="0.65">
<path d="M408.4 401.5 L412 399.8 L415.6 401.5 L412 403.2 Z M408.4 401.5 V405.6 L412 407.3 L415.6 405.6 V401.5 M412 403.2 V407.3"/>
</g>
<path d="M410.8 400 L412 398.2 L413.2 400 Z" fill="#222" stroke-width="0.3"/>
<!-- bottom -->
<g stroke="#444" stroke-width="0.65">
<path d="M424.2 400.6 L427.9 398.9 L431.6 400.6 V404.6 L427.9 406.3 L424.2 404.6 Z M427.9 398.9 V402.8 M424.2 404.6 L427.9 402.8 L431.6 404.6"/>
</g>
<path d="M426.7 405.7 L427.9 407.5 L429.1 405.7 Z" fill="#222" stroke-width="0.3"/>
<!-- left -->
<g stroke="#3a3a3a" stroke-width="0.65">
<path d="M443.2 402.6 L445 399.3 H448.4 L450.1 402.6 L448.4 406 H445 Z M446.6 402.6 H450.1 M446.6 402.6 L445 399.3 M446.6 402.6 L445 406"/>
</g>
<path d="M443.3 401.1 L441.1 402.7 L443.3 404.3 Z" fill="#1a1a1a" stroke="none"/>
<!-- front -->
<path d="M458.2 401.6 L461.9 400 L465.6 401.6 L461.9 403.3 Z" fill="#999" stroke="#222" stroke-width="0.5"/>
<path d="M458.2 401.6 L461.9 403.3 V407.3 L458.2 405.6 Z" fill="#1c1c1c" stroke="#222" stroke-width="0.5"/>
<path d="M465.6 401.6 L461.9 403.3 V407.3 L465.6 405.6 Z" fill="#fafafa" stroke="#222" stroke-width="0.5"/>
<!-- back -->
<path d="M475.2 401.6 L478.9 400 L482.6 401.6 L478.9 403.3 Z" fill="#444" stroke="#222" stroke-width="0.5"/>
<path d="M475.2 401.6 L478.9 403.3 V407.3 L475.2 405.6 Z" fill="#fafafa" stroke="#222" stroke-width="0.5"/>
<path d="M482.6 401.6 L478.9 403.3 V407.3 L482.6 405.6 Z" fill="#1c1c1c" stroke="#222" stroke-width="0.5"/>
<!-- perspective -->
<g stroke="#222" stroke-width="0.7">
<path d="M495.2 402.6 H499.6 V407.5 H495.2 Z" fill="#fafafa"/>
<path d="M495.2 402.6 L501.5 399.6 L503.7 399 L499.6 402.6 M499.6 407.5 L503.4 402.4 L503.7 399"/>
</g>
<!-- orthogonal -->
<g stroke="#222" stroke-width="0.65">
<path d="M514.3 400.3 H519.5 V405 H514.3 Z"/>
<path d="M512 402.6 H517.2 V407.3 H512 Z"/>
<path d="M512 402.6 L514.3 400.3 M517.2 402.6 L519.5 400.3 M517.2 407.3 L519.5 405 M512 407.3 L514.3 405"/>
</g>
<!-- axes -->
<path d="M536 398.7 V403.4 H541.4 M536 403.4 L532.1 407" stroke="#333" stroke-width="0.7"/>
<!-- scale markers -->
<path d="M552.7 398.4 V403.5 M552.7 398.8 H553.9 M552.7 403.5 L549 406.8 M552.7 403.5 H558.6" stroke="#333" stroke-width="0.7"/>
<!-- edges -->
<rect x="566.1" y="400.6" width="7.2" height="6.2" stroke="#444" stroke-width="0.6"/>
<g fill="#222" stroke="none"><rect x="565.6" y="400.1" width="1.1" height="1.1"/><rect x="572.8" y="400.1" width="1.1" height="1.1"/><rect x="565.6" y="406.2" width="1.1" height="1.1"/><rect x="572.8" y="406.2" width="1.1" height="1.1"/></g>
</g>
<text x="553.6" y="408" font-family="Liberation Sans, sans-serif" font-size="5" fill="#222" textLength="5.6" lengthAdjust="spacingAndGlyphs">10</text>
<g fill="#dcdcdc">
<rect x="314.3" y="398" width="0.7" height="11"/>
<rect x="384" y="398" width="0.7" height="11"/>
<rect x="488.3" y="398" width="0.7" height="11"/>
</g>
</svg>

<!-- status bar -->
<div style="left:0;top:412.6px;width:630px;height:11.4px;background:#efefef"></div>
<div style="left:1.10px;top:413px;font-size:9.0px;line-height:12.363px;color:#242424;transform-origin:0 0;transform:scaleX(0.9093);">Fenêtre de rendu: translation = [</div><div style="left:120.00px;top:413px;font-size:9.0px;line-height:12.363px;color:#242424;transform-origin:0 0;transform:scaleX(0.8714);">0.58 2.45 2.81 ],</div><div style="left:180.70px;top:413px;font-size:9.0px;line-height:12.363px;color:#242424;transform-origin:0 0;transform:scaleX(0.9183);">rotation = [</div><div style="left:222.70px;top:413px;font-size:9.0px;line-height:12.363px;color:#242424;transform-origin:0 0;transform:scaleX(0.8820);">48.00 0.00 21.50 ],</div><div style="left:291.60px;top:413px;font-size:9.0px;line-height:12.363px;color:#242424;transform-origin:0 0;transform:scaleX(0.8955);">distance = 172.84 (695x499)</div>
<div style="left:545.30px;top:413px;font-size:9.0px;line-height:12.363px;color:#242424;transform-origin:0 0;transform:scaleX(0.8777);">OpenSCAD 2019.05</div>
</body></html>
